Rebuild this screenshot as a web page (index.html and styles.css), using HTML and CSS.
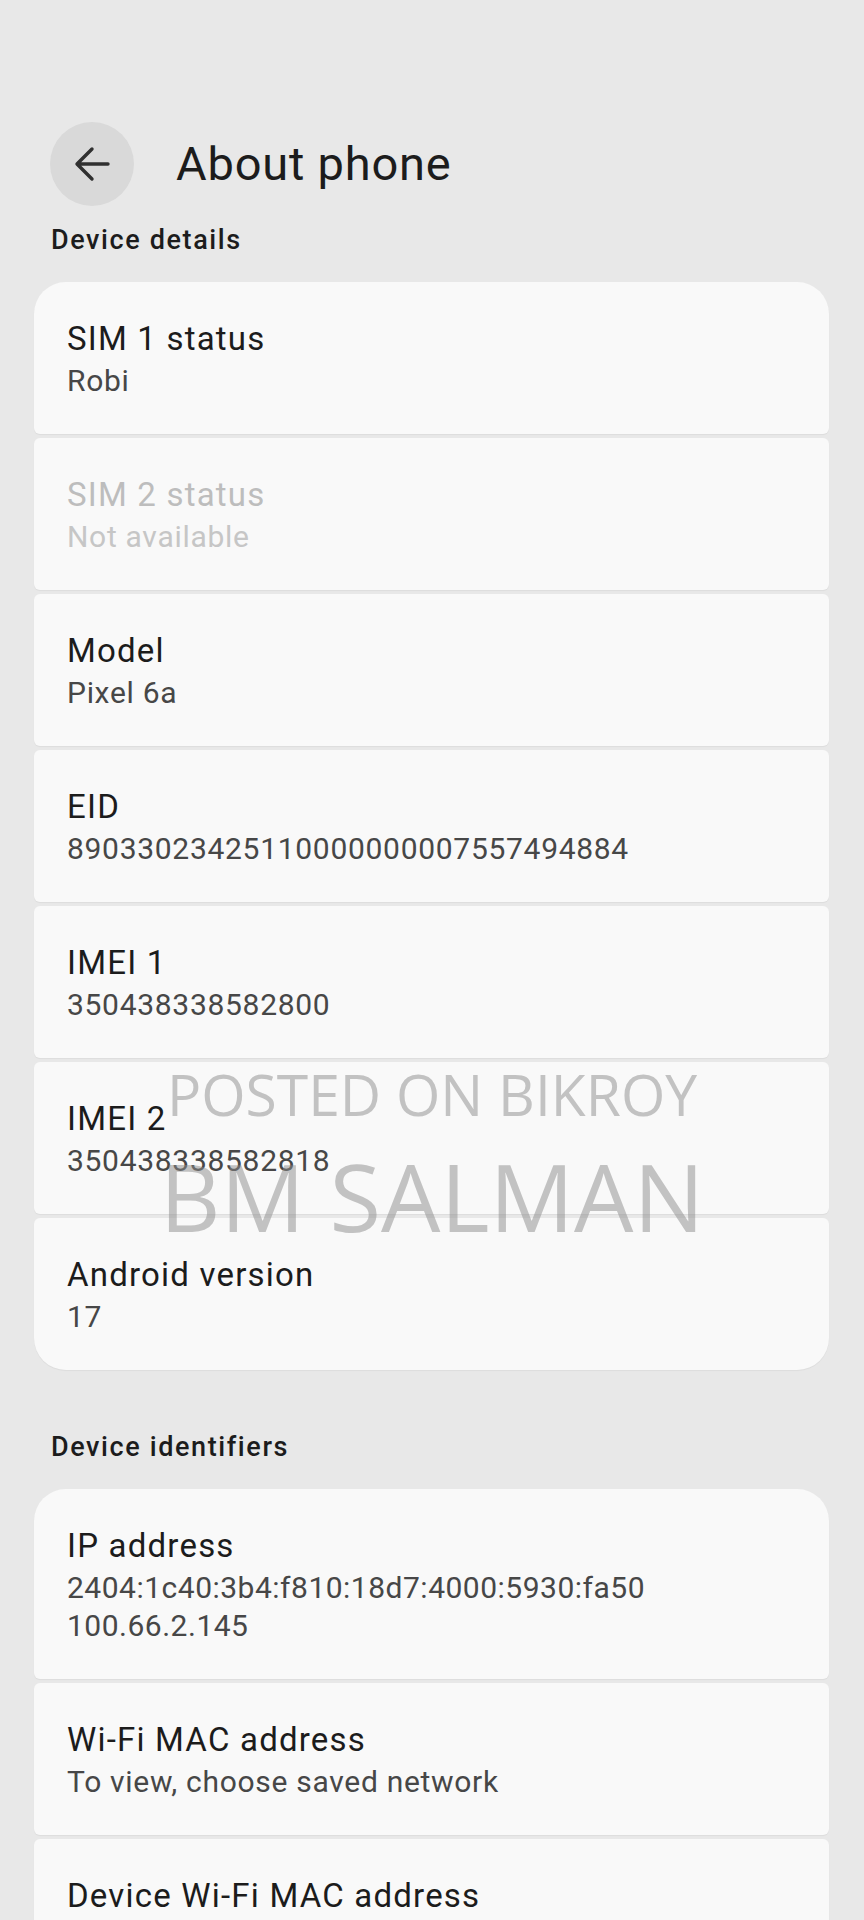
FILE: index.html
```html
<!DOCTYPE html>
<html lang="en">
<head>
    <meta charset="UTF-8">
    <meta name="viewport" content="width=device-width, initial-scale=1.0">
    <title>About phone</title>
    <link rel="stylesheet" href="styles.css">
</head>
<body>
    <header class="topbar">
        <button class="back" aria-label="Back">
            <svg width="40" height="40" viewBox="0 0 40 40">
                <path d="M36 20H5.5M20 5L5 20l15 15" fill="none" stroke="#303030" stroke-width="3.4" stroke-linecap="round" stroke-linejoin="round"/>
            </svg>
        </button>
        <h1>About phone</h1>
    </header>

    <h2 class="section-title">Device details</h2>
    <div class="group">
        <div class="item">
            <div class="item-title">SIM 1 status</div>
            <div class="item-summary">Robi</div>
        </div>
        <div class="item disabled">
            <div class="item-title">SIM 2 status</div>
            <div class="item-summary">Not available</div>
        </div>
        <div class="item">
            <div class="item-title">Model</div>
            <div class="item-summary">Pixel 6a</div>
        </div>
        <div class="item">
            <div class="item-title">EID</div>
            <div class="item-summary">89033023425110000000007557494884</div>
        </div>
        <div class="item">
            <div class="item-title">IMEI 1</div>
            <div class="item-summary">350438338582800</div>
        </div>
        <div class="item">
            <div class="item-title">IMEI 2</div>
            <div class="item-summary">350438338582818</div>
        </div>
        <div class="item">
            <div class="item-title">Android version</div>
            <div class="item-summary">17</div>
        </div>
    </div>

    <h2 class="section-title section-gap">Device identifiers</h2>
    <div class="group">
        <div class="item">
            <div class="item-title">IP address</div>
            <div class="item-summary digits">2404:1c40:3b4:f810:18d7:4000:5930:fa50<br>100.66.2.145</div>
        </div>
        <div class="item">
            <div class="item-title">Wi-Fi MAC address</div>
            <div class="item-summary">To view, choose saved network</div>
        </div>
        <div class="item">
            <div class="item-title">Device Wi-Fi MAC address</div>
        </div>
    </div>

    <div class="watermark">
        <span class="wm-small">POSTED ON BIKROY</span>
        <span class="wm-big">BM SALMAN</span>
    </div>
</body>
</html>
```

FILE: styles.css
```css
body {
    margin: 0;
    background: #e8e8e8;
    font-family: Roboto, "Liberation Sans", sans-serif;
    color: #1c1c1c;
    overflow: hidden;
}
.topbar {
    display: flex;
    align-items: center;
    gap: 42px;
    padding: 122px 0 0 50px;
}
.back {
    width: 84px;
    height: 84px;
    border: none;
    border-radius: 50%;
    background: #d9d9d9;
    display: flex;
    align-items: center;
    justify-content: center;
    padding: 0;
}
h1 {
    margin: 0;
    font-size: 47px;
    line-height: 56px;
    font-weight: 400;
    letter-spacing: 0.8px;
}
.section-title {
    margin: 18px 0 26px 51px;
    font-size: 27px;
    line-height: 32px;
    font-weight: 500;
    letter-spacing: 1.6px;
}
.section-gap {
    margin-top: 61px;
}
.group {
    display: flex;
    flex-direction: column;
    gap: 4px;
    margin: 0 35px 0 34px;
}
.item {
    background: #f9f9f9;
    border-radius: 6px;
    padding: 37px 32px 34px 33px;
    min-height: 81px;
    box-shadow: 0 1px 1px rgba(0, 0, 0, 0.05);
}
.item:first-child {
    border-top-left-radius: 32px;
    border-top-right-radius: 32px;
}
.item:last-child {
    border-bottom-left-radius: 32px;
    border-bottom-right-radius: 32px;
}
.item-title {
    font-size: 33px;
    line-height: 40px;
    letter-spacing: 1.2px;
    margin-bottom: 3px;
}
.item-summary {
    font-size: 30px;
    line-height: 38px;
    letter-spacing: 0.7px;
    color: #474747;
}
.item-summary.digits {
    letter-spacing: 0.5px;
}
.disabled .item-title {
    color: #bdbdbd;
}
.disabled .item-summary {
    color: #c6c6c6;
}
.watermark {
    position: absolute;
    top: 1064px;
    left: 0;
    right: 0;
    text-align: center;
    font-family: "Open Sans", sans-serif;
    color: rgba(140, 140, 140, 0.5);
    pointer-events: none;
}
.wm-small {
    display: block;
    font-size: 57px;
    line-height: 60px;
    margin-bottom: 22px;
}
.wm-big {
    display: block;
    font-size: 94px;
    line-height: 100px;
}
```
